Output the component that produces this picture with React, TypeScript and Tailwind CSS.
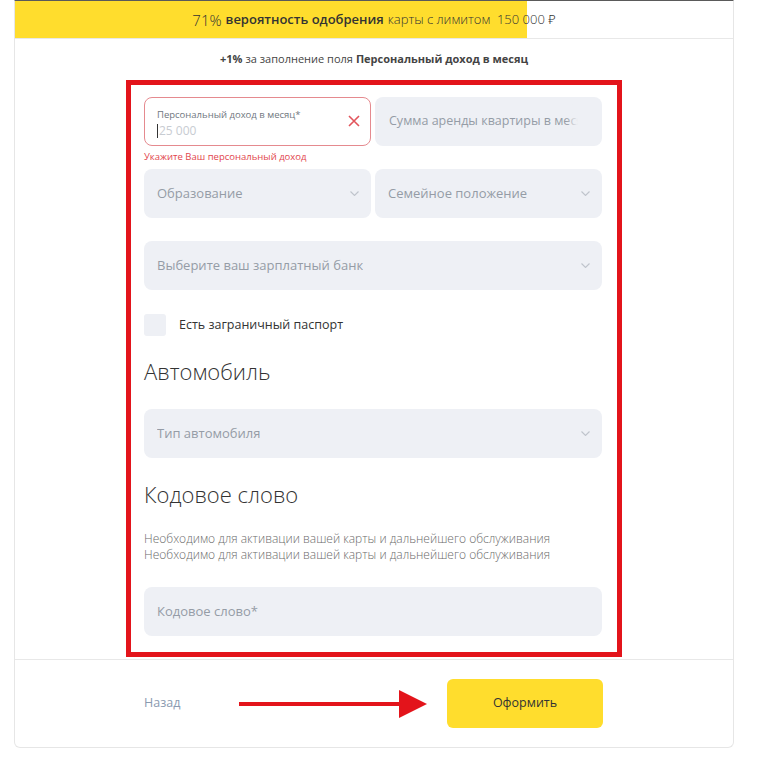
import React from 'react';

function Chevron() {
    return (
        <svg width="9" height="5" viewBox="0 0 9 5" fill="none" stroke="#bfc4cc" strokeWidth="1.1">
            <path d="M0.5 0.5l4 4 4-4" />
        </svg>
    );
}

function Field({ text, select = false, className = '' }: { text: string; select?: boolean; className?: string }) {
    return (
        <div className={`h-[49px] rounded-lg bg-[#eef0f5] flex items-center justify-between pl-[13px] pr-[12px] ${className}`}>
            <span className="text-[13px] text-[#959ca6] whitespace-nowrap overflow-hidden">{text}</span>
            {select && <Chevron />}
        </div>
    );
}

export default function App() {
    return (
        <div className="w-[758px] h-[774px] bg-white pl-[14px] pt-0" style={{ fontFamily: '"Open Sans", "Noto Sans", sans-serif' }}>
            <div className="w-[720px] border-x border-b border-[#e6e6e6] rounded-b-md border-t border-t-[#5a5a5a]">
                {/* progress */}
                <div className="relative h-[38px] border-b border-[#e8e8e8] bg-white">
                    <div className="absolute left-0 top-0 h-full w-[512px] bg-[#ffdd2d]" />
                    <div className="relative h-full flex items-center justify-center text-[13px] text-[#333] pt-[1px]">
                        <span className="text-[15px] font-light mr-[4px]">71%</span>
                        <span className="font-semibold mr-[4px]">вероятность одобрения</span>
                        <span className="font-light">карты с лимитом&nbsp;&nbsp;150 000 ₽</span>
                    </div>
                </div>

                <div className="h-[41px] flex items-center justify-center text-[11px] text-[#444] pb-[1px]">
                    <span className="font-bold mr-[3px]">+1%</span>
                    <span className="mr-[3px]">за заполнение поля</span>
                    <span className="font-bold">Персональный доход в месяц</span>
                </div>

                {/* highlighted form */}
                <div className="mx-auto w-[496px] border-[5px] border-[#e3141b] pt-[12px] pb-[16px] pl-[13px] pr-[15px]">
                    <div className="grid grid-cols-2 gap-[4px]">
                        <div className="relative h-[49px] rounded-lg border border-[#e58a8f] bg-white pl-[12px] pt-[10px]">
                            <div className="text-[9.5px] text-[#707780] leading-[14px]">Персональный доход в месяц*</div>
                            <div className="flex items-center text-[12px] text-[#c8ccd2] leading-[18px]">
                                <span className="w-[1px] h-[14px] bg-[#333] mr-[1px]" />
                                25 000
                            </div>
                            <svg className="absolute right-[10px] top-[17px]" width="12" height="12" viewBox="0 0 12 12" stroke="#e2555c" strokeWidth="1.6">
                                <path d="M1 1l10 10M11 1L1 11" />
                            </svg>
                        </div>
                        <div className="relative h-[49px] rounded-lg bg-[#eef0f5] flex items-center pl-[14px] pr-[24px] overflow-hidden">
                            <span className="text-[12.5px] text-[#959ca6] whitespace-nowrap overflow-hidden">Сумма аренды квартиры в месяц</span>
                            <div className="absolute right-[24px] top-0 h-full w-[12px] bg-gradient-to-r from-transparent to-[#eef0f5]" />
                        </div>
                    </div>
                    <div className="text-[9.5px] text-[#e2454c] mt-[4px] h-[19px]">Укажите Ваш персональный доход</div>

                    <div className="grid grid-cols-2 gap-[4px]">
                        <Field text="Образование" select />
                        <Field text="Семейное положение" select />
                    </div>

                    <Field text="Выберите ваш зарплатный банк" select className="mt-[23px]" />

                    <div className="flex items-center mt-[23px] h-[23px] pt-[1px]">
                        <div className="w-[22px] h-[22px] rounded-[3px] bg-[#eef0f5]" />
                        <span className="ml-[13px] text-[12.5px] text-[#333]">Есть заграничный паспорт</span>
                    </div>

                    <div className="mt-[20px] text-[22px] font-light text-[#333] leading-[30px]">Автомобиль</div>

                    <Field text="Тип автомобиля" select className="mt-[23px]" />

                    <div className="mt-[21px] text-[22px] font-light text-[#333] leading-[30px]">Кодовое слово</div>

                    <div className="mt-[22px] text-[12px] text-[#6b6b6b] leading-[16px] font-light">
                        <div>Необходимо для активации вашей карты и дальнейшего обслуживания</div>
                        <div>Необходимо для активации вашей карты и дальнейшего обслуживания</div>
                    </div>

                    <Field text="Кодовое слово*" className="mt-[24px]" />
                </div>

                {/* footer */}
                <div className="mt-[2px] border-t border-[#e8e8e8] h-[88px] flex items-center pl-[129px] pr-[130px]">
                    <span className="text-[12.5px] text-[#8a9ab0]">Назад</span>
                    <svg className="ml-[59px]" width="188" height="30" viewBox="0 0 188 30">
                        <rect x="0" y="13" width="164" height="4" fill="#e3141b" />
                        <path d="M160 1L188 15L160 29Z" fill="#e3141b" />
                    </svg>
                    <button className="ml-auto w-[156px] h-[49px] rounded-md bg-[#ffdd2d] text-[12.5px] text-[#333]">Оформить</button>
                </div>
            </div>
        </div>
    );
}
